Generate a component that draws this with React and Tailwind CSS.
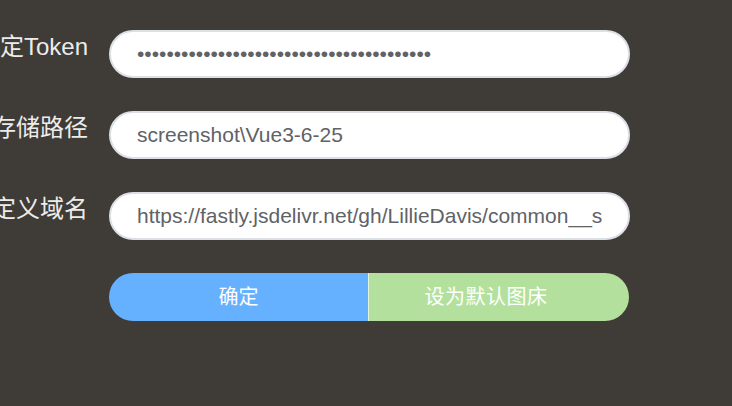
export default function App() {
  const font = { fontFamily: '"Liberation Sans", Arial, "Noto Sans CJK SC", sans-serif' };
  const rows = [
    { label: '设定Token', value: '•'.repeat(40), pw: true },
    { label: '自定存储路径', value: 'screenshot\\Vue3-6-25' },
    { label: '自定义域名', value: 'https://fastly.jsdelivr.net/gh/LillieDavis/common__static/' },
  ];
  return (
    <div className="w-[732px] h-[406px] bg-[#3f3b36] pt-[30px] overflow-hidden" style={font}>
      {rows.map((r, i) => (
        <div key={i} className="flex items-start mb-[33px]">
          <div className="w-[88px] shrink-0 flex justify-end mr-[21px] mt-[1px]">
            <span className="whitespace-nowrap shrink-0 text-[24px] leading-[32px] text-[#ececec]">{r.label}</span>
          </div>
          <div className="w-[521px] h-[48px] rounded-full bg-white border-2 border-[#dcdfe6] flex items-center pl-[26px] pr-[26px]">
            <div className="flex-1 overflow-hidden">
              <span className="block whitespace-nowrap text-[21px] text-[#606266]">{r.value}</span>
            </div>
          </div>
        </div>
      ))}
      <div className="flex ml-[109px] mt-[1px] w-[520px] h-[48px]">
        <div className="w-[259px] h-full bg-[#66b1ff] rounded-l-full flex items-center justify-center text-white text-[20px]">确定</div>
        <div className="flex-1 h-full bg-[#b3e19d] rounded-r-full border-l border-[#e3f3dc] flex items-center justify-center pr-[26px] text-white text-[20px] tracking-[0.5px]">设为默认图床</div>
      </div>
    </div>
  );
}
